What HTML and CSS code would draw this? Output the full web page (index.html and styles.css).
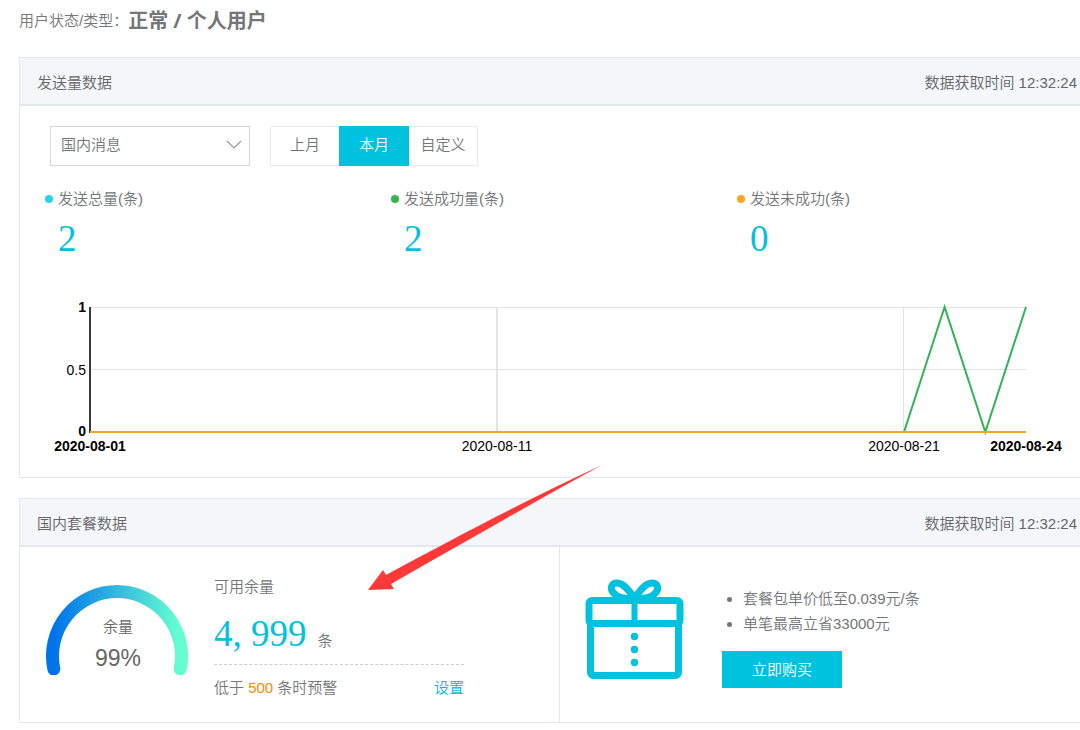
FILE: index.html
```html
<!DOCTYPE html>
<html lang="zh-CN">
<head>
<meta charset="utf-8">
<meta name="viewport" content="width=device-width, initial-scale=1">
<title>发送量数据</title>
<link rel="stylesheet" href="styles.css">
</head>
<body>
<main class="page">
  <p class="status">用户状态/类型：<strong class="status-value">正常 / 个人用户</strong></p>

  <section class="panel">
    <header class="panel-head">
      <h2 class="panel-title">发送量数据</h2>
      <span>数据获取时间 12:32:24</span>
    </header>
    <div class="filters">
      <div class="picker">
        <select class="picker-select" aria-label="消息类型">
          <option>国内消息</option>
        </select>
        <svg class="picker-arrow" width="16" height="10" viewBox="0 0 16 10" aria-hidden="true"><path d="M1 1l7 7 7-7" fill="none" stroke="#999" stroke-width="1.2"/></svg>
      </div>
      <div class="range">
        <button type="button" class="range-item">上月</button>
        <button type="button" class="range-item active">本月</button>
        <button type="button" class="range-item">自定义</button>
      </div>
    </div>
    <div class="stats">
      <div class="stat"><i class="dot total"></i><span>发送总量(条)</span><b class="figure">2</b></div>
      <div class="stat"><i class="dot success"></i><span>发送成功量(条)</span><b class="figure">2</b></div>
      <div class="stat"><i class="dot failed"></i><span>发送未成功(条)</span><b class="figure">0</b></div>
    </div>
    <svg class="chart" viewBox="0 0 1060 187" role="img" aria-label="每日发送量">
      <g fill="none" stroke="#e3e3e3">
        <path d="M71 17.500H1006M71 79.500H1006M883.500 17V142"/>
        <path d="M477 17V142" stroke-width="2"/>
      </g>
      <path d="M70 17V143" stroke="#3a3a3a" stroke-width="2"/>
      <path d="M70 142H884L924.600 17 965.300 142 1006 17" fill="none" stroke="#2fb457" stroke-width="2"/>
      <path d="M70 142H1006" stroke="#f0a622" stroke-width="2"/>
      <g text-anchor="end">
        <text class="bold" x="66" y="22">1</text>
        <text x="66" y="85">0.5</text>
        <text class="bold" x="66" y="146">0</text>
      </g>
      <g text-anchor="middle">
        <text class="bold" x="70" y="161">2020-08-01</text>
        <text x="477" y="161">2020-08-11</text>
        <text x="884" y="161">2020-08-21</text>
        <text class="bold" x="1006" y="161">2020-08-24</text>
      </g>
    </svg>
  </section>

  <section class="panel">
    <header class="panel-head">
      <h2 class="panel-title">国内套餐数据</h2>
      <span>数据获取时间 12:32:24</span>
    </header>
    <div class="package">
      <div class="balance">
        <div class="gauge">
          <svg class="gauge-arc" width="142" height="90" viewBox="0 0 142 90" aria-hidden="true">
            <defs>
              <linearGradient id="arc" gradientUnits="userSpaceOnUse" x1="8" y1="0" x2="134" y2="0">
                <stop offset="0" stop-color="#0073eb"/>
                <stop offset="1" stop-color="#66ffd1"/>
              </linearGradient>
            </defs>
            <path d="M7.800 84A64.500 64.500 0 1 1 134.200 84" fill="none" stroke="url(#arc)" stroke-width="13" stroke-linecap="round"/>
          </svg>
          <div class="gauge-text"><span>余量</span><span class="percent">99%</span></div>
        </div>
        <div class="remaining">
          <div>可用余量</div>
          <div class="amount"><b class="figure">4, 999</b><span>条</span></div>
          <div class="warning"><span>低于 <em class="limit">500</em> 条时预警</span><a class="link" href="#">设置</a></div>
        </div>
      </div>
      <div class="offer">
        <svg class="gift" width="100" height="102" viewBox="0 0 100 102" fill="none" stroke="#00c1de" stroke-width="7" aria-hidden="true">
          <rect x="4" y="21.500" width="91" height="23" rx="3"/>
          <path d="M5.500 44V93.500a3 3 0 0 0 3 3H90.500a3 3 0 0 0 3-3V44"/>
          <path d="M49.500 21V44" stroke-width="6"/>
          <path d="M49 19C45 13 39 4 32 4C26 4 25 9.500 28 13.500C32 18.500 40 20 49 20M50 19C54 13 60 4 67 4C73 4 74 9.500 71 13.500C67 18.500 59 20 50 20"/>
          <g fill="#00c1de" stroke="none"><circle cx="49.500" cy="57.500" r="3.700"/><circle cx="49.500" cy="70.500" r="3.700"/><circle cx="49.500" cy="83.500" r="3.700"/></g>
        </svg>
        <div>
          <ul class="perks">
            <li>套餐包单价低至0.039元/条</li>
            <li>单笔最高立省33000元</li>
          </ul>
          <button type="button" class="buy">立即购买</button>
        </div>
      </div>
    </div>
  </section>

  <svg class="pointer" width="236" height="126" viewBox="0 0 236 126" aria-hidden="true"><path d="M0 125L15 105 18 110C95 68 165 32 234 0C170 35 98 76 23 119L26 124Z" fill="#ff3838"/></svg>
</main>
</body>
</html>
```
FILE: styles.css
```css
* {
  box-sizing: border-box;
}

body {
  margin: 0;
  background: #fff;
  color: #73777a;
  font: 15px/24px "Liberation Sans", "Noto Sans CJK SC", sans-serif;
  font-weight: 350;
}

button,
select {
  font: inherit;
  color: inherit;
}

.page {
  position: relative;
  padding-left: 19px;
}

.status {
  display: flex;
  align-items: center;
  height: 42px;
  margin: 0 0 15px;
}

.status-value {
  font-family: "Noto Sans", "Noto Sans CJK SC", sans-serif;
  font-size: 20px;
  font-weight: 700;
}

.panel {
  margin-bottom: 20px;
  border: 1px solid #e4e8ec;
  border-right: 0;
}

.panel-head {
  display: flex;
  align-items: center;
  justify-content: space-between;
  height: 48px;
  padding: 4px 3px 0 17px;
  border-bottom: 2px solid #e4e8ec;
  background: #f4f6fa;
  color: #666;
}

.panel-title {
  margin: 0;
  font-size: 15px;
  font-weight: inherit;
}

.filters {
  display: flex;
  gap: 20px;
  padding: 20px 30px 21px;
}

.picker {
  position: relative;
  width: 200px;
}

.picker-select {
  width: 100%;
  height: 40px;
  padding: 0 10px 2px;
  border: 1px solid #d6d6d6;
  border-radius: 0;
  background: #fff;
  appearance: none;
}

.picker-arrow {
  position: absolute;
  top: 14px;
  right: 8px;
  pointer-events: none;
}

.range {
  display: flex;
}

.range-item {
  width: 70px;
  height: 40px;
  padding: 0 0 2px;
  border: 1px solid #ebebeb;
  background: #fff;
}

.range-item:first-child {
  width: 69px;
  border-right: 0;
}

.range-item:last-child {
  width: 69px;
  border-left: 0;
}

.range-item.active {
  border-color: #00c1de;
  background: #00c1de;
  color: #fff;
}

.stats {
  display: grid;
  grid-template-columns: 346fr 346fr 343fr;
  padding-left: 25px;
  margin-bottom: 31px;
}

.stat {
  display: grid;
  grid-template-columns: 8px 1fr;
  column-gap: 5px;
  row-gap: 8px;
  align-items: center;
}

.dot {
  width: 8px;
  height: 8px;
  border-radius: 50%;
}

.total {
  background: #28d3ee;
}

.success {
  background: #39b54a;
}

.failed {
  background: #f9a825;
}

.figure {
  color: #00c1de;
  font: 37px/40px "Liberation Serif", serif;
}

.stat .figure {
  grid-column: 2;
}

.chart {
  display: block;
  width: 100%;
  fill: #000;
  font-size: 14px;
}

.bold {
  font-weight: 700;
}

.package {
  display: grid;
  grid-template-columns: 540fr 520fr;
}

.balance {
  display: flex;
  gap: 26px;
  padding: 28px 0 22px 26px;
  border-right: 1px solid #e4e8ec;
}

.gauge {
  display: grid;
  align-content: start;
  padding-top: 10px;
}

.gauge-arc,
.gauge-text {
  grid-area: 1 / 1;
}

.gauge-text {
  display: grid;
  gap: 7px;
  align-content: start;
  justify-items: center;
  padding: 30px 0 0 2px;
  color: #666;
}

.percent {
  font-size: 23px;
}

.remaining {
  width: 250px;
}

.amount {
  display: flex;
  align-items: baseline;
  gap: 11px;
  height: 66px;
  padding-top: 15px;
  border-bottom: 1px dashed #ccc;
}

.warning {
  display: flex;
  justify-content: space-between;
  padding-top: 11px;
}

.limit {
  color: #ff8a00;
  font-style: normal;
}

.link {
  color: #00b7d8;
  text-decoration: none;
}

.offer {
  display: flex;
  gap: 37px;
  padding: 32px 0 0 25px;
}

.perks {
  margin: 7px 0 15px;
  padding-left: 21px;
  line-height: 25px;
}

.buy {
  width: 120px;
  height: 37px;
  padding: 0;
  border: 0;
  background: #00c1de;
  color: #fff;
}

.pointer {
  position: absolute;
  top: 465px;
  left: 368px;
  pointer-events: none;
}
```
